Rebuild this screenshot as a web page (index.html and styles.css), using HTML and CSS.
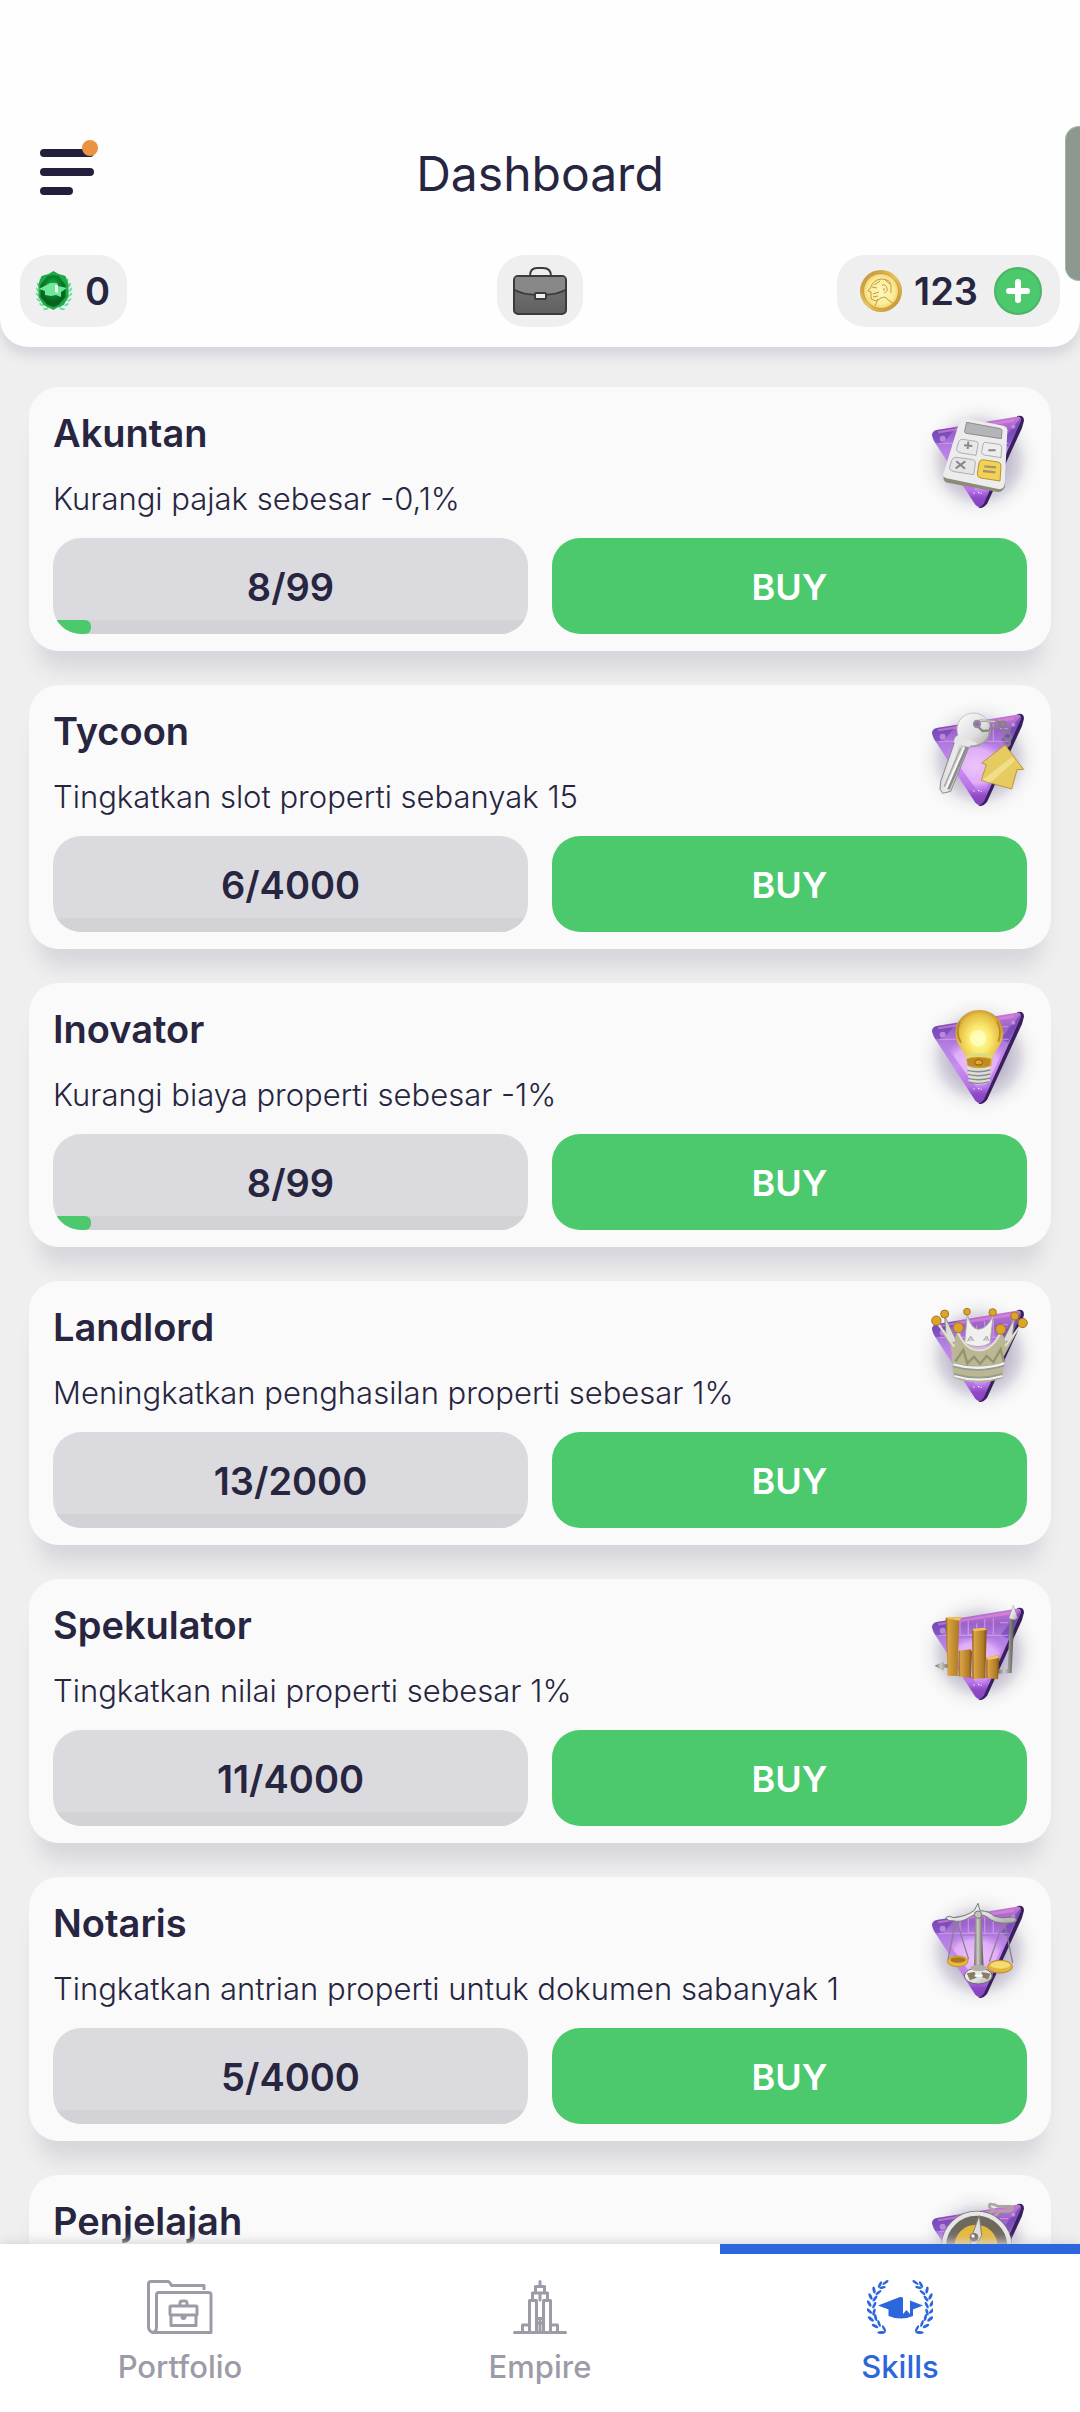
FILE: index.html
```html
<!DOCTYPE html>
<html lang="id">
<head>
<meta charset="utf-8">
<meta name="viewport" content="width=device-width, initial-scale=1">
<title>Dashboard</title>
<link rel="stylesheet" href="styles.css">
</head>
<body>
<svg class="sprite" aria-hidden="true">
  <defs>
    <radialGradient id="glow"><stop offset="0.3" stop-color="#6b5b95" stop-opacity="0.55"/><stop offset="0.65" stop-color="#75698f" stop-opacity="0.26"/><stop offset="0.82" stop-color="#a8a4b4" stop-opacity="0.1"/><stop offset="1" stop-color="#ccc" stop-opacity="0"/></radialGradient>
    <linearGradient id="violet" x1="0" y1="0" x2="0" y2="1"><stop offset="0" stop-color="#c47ad6"/><stop offset="0.17" stop-color="#9a62c8"/><stop offset="0.33" stop-color="#b07be0"/><stop offset="0.6" stop-color="#c98df0"/><stop offset="0.82" stop-color="#b672e6"/><stop offset="0.9" stop-color="#9049c6"/><stop offset="1" stop-color="#8443c0"/></linearGradient>
    <radialGradient id="lilac" cx="0.5" cy="0.45" r="0.55"><stop offset="0" stop-color="#edc4fa"/><stop offset="0.65" stop-color="#e3b2f8" stop-opacity="0.9"/><stop offset="1" stop-color="#c98df0" stop-opacity="0"/></radialGradient>
    <linearGradient id="silver" x1="0" y1="0" x2="1" y2="1"><stop offset="0" stop-color="#fdfdfd"/><stop offset="0.6" stop-color="#dededf"/><stop offset="1" stop-color="#a5a4a4"/></linearGradient>
    <linearGradient id="keysilver" x1="0" y1="0" x2="1" y2="0.4"><stop offset="0" stop-color="#c4c4c4"/><stop offset="0.5" stop-color="#ececec"/><stop offset="1" stop-color="#9c9a9c"/></linearGradient>
    <linearGradient id="steel"><stop offset="0" stop-color="#6d6a66"/><stop offset="0.4" stop-color="#cfcdc7"/><stop offset="1" stop-color="#56534f"/></linearGradient>
    <linearGradient id="gold"><stop offset="0" stop-color="#8d5c12"/><stop offset="0.15" stop-color="#d9a443"/><stop offset="0.75" stop-color="#b07c25"/><stop offset="1" stop-color="#7b4d0d"/></linearGradient>
    <radialGradient id="glass" cx="0.5" cy="0.5" r="0.55"><stop offset="0" stop-color="#fffcae"/><stop offset="0.4" stop-color="#fbea70"/><stop offset="0.78" stop-color="#e6bf45"/><stop offset="1" stop-color="#b98a2a"/></radialGradient>
    <radialGradient id="coin"><stop offset="0" stop-color="#fff7ba"/><stop offset="0.75" stop-color="#fbeb9c"/><stop offset="1" stop-color="#f2d46c"/></radialGradient>
    <linearGradient id="rim" x1="0" y1="0" x2="1" y2="1"><stop offset="0" stop-color="#b78a2f"/><stop offset="0.5" stop-color="#e9c560"/><stop offset="1" stop-color="#b8892c"/></linearGradient>
    <radialGradient id="emerald" cx="0.5" cy="0.35"><stop offset="0" stop-color="#27b84c"/><stop offset="0.5" stop-color="#0c8a2f"/><stop offset="1" stop-color="#07641f"/></radialGradient>
    <linearGradient id="leather" x1="0" y1="0" x2="0" y2="1"><stop offset="0" stop-color="#555"/><stop offset="0.5" stop-color="#6b6b6b"/><stop offset="1" stop-color="#5f5f5f"/></linearGradient>
  </defs>
  <symbol id="gem" viewBox="0 0 420 420" overflow="visible">
    <ellipse cx="208" cy="200" rx="182" ry="178" fill="url(#glow)"/>
    <path d="M322 66q20-4 20 14l-6 22-104 226q-10 16-26 14z" fill="#38205c"/>
    <path d="M66 124q0-12 14-16L318 68q18-3 14 14L222 328q-12 20-26 4L70 138z" fill="url(#violet)"/>
    <path d="M66 124q0-12 14-16l60-8-40 46-24 1z M332 72l-60 74 22 12 38-74z" fill="#5f3bad" opacity=".55"/>
    <path d="M100 156h192l-70 146h-16z" fill="url(#lilac)"/>
    <path d="M84 112l230-38-4 10-225 34z" fill="#e58bd9" opacity=".6"/>
    <path d="M88 148h208M150 108v38M175 104v42h25v-34M224 100v46M250 96v50M270 110h24" stroke="#e2a6ee" stroke-width="4" fill="none" opacity=".6"/>
    <circle cx="98" cy="134" r="9" fill="#d6a0eb" opacity=".7"/><circle cx="310" cy="98" r="6" fill="#d6a0eb" opacity=".7"/>
    <path d="M190 297h4M204 296h4M212 298h3" stroke="#fff" stroke-width="3"/>
  </symbol>
  <symbol id="laurel" viewBox="0 0 24 54" overflow="visible">
    <g fill="currentColor">
      <ellipse cx="18.500" cy="2.500" rx="3.600" ry="1.300" transform="rotate(-35 18.500 2.500)"/>
      <ellipse cx="13" cy="4.500" rx="3.600" ry="1.400" transform="rotate(-65 13 4.500)"/>
      <ellipse cx="15.500" cy="7.500" rx="3.400" ry="1.300" transform="rotate(-10 15.500 7.500)"/>
      <ellipse cx="7" cy="10" rx="3.600" ry="1.500" transform="rotate(-100 7 10)"/>
      <ellipse cx="11.500" cy="12.500" rx="3.600" ry="1.300" transform="rotate(-40 11.500 12.500)"/>
      <ellipse cx="3.500" cy="16.500" rx="3.600" ry="1.500" transform="rotate(65 3.500 16.500)"/>
      <ellipse cx="8" cy="18.500" rx="3.600" ry="1.400" transform="rotate(-55 8 18.500)"/>
      <ellipse cx="2.200" cy="23.500" rx="3.600" ry="1.500" transform="rotate(60 2.200 23.500)"/>
      <ellipse cx="7.300" cy="25" rx="3.600" ry="1.400" transform="rotate(-65 7.300 25)"/>
      <ellipse cx="2.200" cy="31" rx="3.600" ry="1.500" transform="rotate(45 2.200 31)"/>
      <ellipse cx="7" cy="32" rx="3.600" ry="1.400" transform="rotate(-75 7 32)"/>
      <ellipse cx="3.800" cy="39" rx="3.600" ry="1.500" transform="rotate(38 3.800 39)"/>
      <ellipse cx="8.600" cy="37.500" rx="3.600" ry="1.400" transform="rotate(78 8.600 37.500)"/>
      <ellipse cx="8" cy="46" rx="3.600" ry="1.500" transform="rotate(30 8 46)"/>
      <ellipse cx="12" cy="43.500" rx="3.600" ry="1.300" transform="rotate(70 12 43.500)"/>
      <ellipse cx="14.500" cy="52.500" rx="4.200" ry="1.400" transform="rotate(-4 14.500 52.500)"/>
      <ellipse cx="17" cy="48.500" rx="3.600" ry="1.300" transform="rotate(62 17 48.500)"/>
    </g>
  </symbol>
</svg>

<header class="topbar">
  <div class="title-row">
    <button class="menu" type="button" aria-label="Menu">
      <svg width="60" height="60" viewBox="0 0 60 60">
        <path d="M6 15h46M6 34h46M6 53h25" stroke="#221f3d" stroke-width="8" stroke-linecap="round"/>
        <circle cx="52" cy="10" r="8" fill="#eb9142"/>
      </svg>
    </button>
    <h1>Dashboard</h1>
  </div>
  <div class="stats">
    <div class="chip chip-points">
      <svg width="38" height="40" viewBox="0 0 38 40">
        <g color="#5be596"><use href="#laurel" x="1" y="3" width="16" height="36"/><g transform="translate(38 0) scale(-1 1)"><use href="#laurel" x="1" y="3" width="16" height="36"/></g></g>
        <path d="M18.500 0l5 3 7 2 3 8v13l-5 8-7 3-3 2-4-2-6-3-5-8V13l3-8 7-2z" fill="#20a846"/>
        <path d="M18.500 4l5 1 7 9v12l-7 8-5 2-6-2-7-8V14l7-9z" fill="url(#emerald)"/>
        <path d="M4 18l11-6h7l1 3 9 2-6 4v5l-5-2-5 1-6-1v-4z" fill="#6fe89b"/><path d="M20 14h3v8l-3-1z" fill="#e8fff0"/>
      </svg>
      <span>0</span>
    </div>
    <button class="chip chip-case" type="button" aria-label="Portfolio">
      <svg width="54" height="48" viewBox="0 0 54 48">
        <path d="M17 9q0-8 7-8h6q8 0 8 8" fill="none" stroke="#3b3b3b" stroke-width="2"/>
        <rect x="1" y="9" width="52" height="38" rx="4" fill="url(#leather)" stroke="#3b3b3b" stroke-width="2"/>
        <path d="M2 12q0-2 2-2h46q2 0 2 2v11q-8 5-25 5T2 23z" fill="#888"/>
        <path d="M2 23q8 5 25 5t25-5" fill="none" stroke="#3b3b3b" stroke-width="2"/>
        <rect x="22" y="26" width="11" height="6" rx="1" fill="#eee" stroke="#3b3b3b" stroke-width="2"/>
      </svg>
    </button>
    <div class="chip chip-coins">
      <svg width="42" height="42" viewBox="0 0 42 42">
        <circle cx="21" cy="21" r="21" fill="url(#rim)"/><circle cx="21" cy="21" r="17.500" fill="url(#coin)" stroke="#c99d3d"/>
        <path d="M11 17q2-7 10-8 9 0 10 6v8M11 17l-3 4 3 1v7l5 2 5-3M12 17l5 1M22 15q4-1 5 3t-3 5M21 28q5-2 6 1l7 5M15 36l3-7M25 10l5 4M20 11l-6 4M13 24l6-2M13 27l5-1M24 18v3" fill="none" stroke="#c39b3c" stroke-width="1"/>
      </svg>
      <span>123</span>
      <button class="add" type="button" aria-label="Add">
        <svg width="24" height="24" viewBox="0 0 24 24"><path d="M12 3v18M3 12h18" stroke="#fff" stroke-width="6" stroke-linecap="round"/></svg>
      </button>
    </div>
  </div>
</header>

<main class="skills">
  <article class="card">
    <div class="head">
      <div class="copy"><h2>Akuntan</h2><p>Kurangi pajak sebesar -0,1%</p></div>
      <svg class="badge" viewBox="63 60 288 288" aria-hidden="true">
        <use href="#gem" width="420" height="420"/>
        <path d="M101 248q-3 14 12 18l150 28q14 1 21-14l2-14-180-30z" fill="#8d8b78"/>
        <path d="M165 72l115 23q13 3 12 15l-8 160q-2 17-19 15l-155-32q-14-4-9-16l47-152q5-15 17-13z" fill="#ececed"/>
        <path d="M170 85l101 19q6 1 5 8l-2 22-105-16q-6-1-5-8z" fill="#b5b5b8" stroke="#8b8b8e" stroke-width="3"/>
        <g stroke="#8f8f90" stroke-width="2"><path d="M158 136l40 6q8 2 6 10l-6 32-44-7q-16-3-14-14l6-20q4-8 12-7z" fill="#e8e8ea"/><path d="M225 145l42 6q9 2 8 10l-2 30-50-8q-9-2-8-10l4-20q2-9 6-8z" fill="#ededef"/><path d="M138 190l46 6q14 2 12 13l-5 33-58-9q-16-3-14-14l6-20q5-10 13-9z" fill="#e5e5e8"/></g>
        <path d="M218 197l46 7q10 2 9 12l-3 45-58-9q-11-3-10-13l5-32q3-11 11-10z" fill="#f1d158" stroke="#ba9227" stroke-width="3"/>
        <path d="M162 154l25 2M175 143l-2 22M235 169h22M139 202l26 22M166 202l-29 21" stroke="#88888a" stroke-width="6"/><path d="M223 217l35 3M219 231l37 4" stroke="#a5966a" stroke-width="7"/>
      </svg>
    </div>
    <div class="actions">
      <div class="level"><span>8/99</span><div class="track"><div class="fill" style="width:8%"></div></div></div>
      <button class="buy" type="button">BUY</button>
    </div>
  </article>

  <article class="card">
    <div class="head">
      <div class="copy"><h2>Tycoon</h2><p>Tingkatkan slot properti sebanyak 15</p></div>
      <svg class="badge" viewBox="63 60 288 288" aria-hidden="true">
        <use href="#gem" width="420" height="420"/>
        <path d="M134 150L92 268l-2 24 8 12 24-6 56-136z" fill="url(#keysilver)" stroke="#8a8a8a" stroke-width="3"/>
        <path d="M171 164l-56 128" stroke="#8d8d8d" stroke-width="8"/>
        <path d="M152 168L103 284" stroke="#a9a9a9" stroke-width="5"/><path d="M162 166L110 288" stroke="#fafafa" stroke-width="5"/>
        <circle cx="191" cy="113" r="50" fill="url(#silver)" stroke="#b0afb0" stroke-width="2"/>
        <path d="M146 128q-16 8-14 24l46 14q16-2 26-10z" fill="#e6e6e6"/>
        <path d="M239 118q-2 42-60 46" fill="none" stroke="#9b999b" stroke-width="5"/>
        <circle cx="201" cy="96" r="10" fill="#936dba" stroke="#969496" stroke-width="5"/>
        <path d="M208 86l48 2q18 2 15 13-8 8-34 9M204 104l14 13 22-2" fill="none" stroke="#8a8683" stroke-width="7"/><path d="M210 86l46 2" stroke="#e6e6e6" stroke-width="3"/>
        <g fill="none" stroke="#858080" stroke-width="5"><ellipse cx="278" cy="96" rx="11" ry="8"/><ellipse cx="289" cy="114" rx="11" ry="9"/><ellipse cx="292" cy="132" rx="11" ry="9"/><ellipse cx="292" cy="151" rx="8" ry="11"/></g>
        <path d="M285 159l56 73-20 1-16 58-91-26 15-47-14-5z" fill="#e6cb60" stroke="#b79642" stroke-width="3"/><path d="M217 264l90-70 8 12-74 66z" fill="#f1dd8a"/>
      </svg>
    </div>
    <div class="actions">
      <div class="level"><span>6/4000</span><div class="track"></div></div>
      <button class="buy" type="button">BUY</button>
    </div>
  </article>

  <article class="card">
    <div class="head">
      <div class="copy"><h2>Inovator</h2><p>Kurangi biaya properti sebesar -1%</p></div>
      <svg class="badge" viewBox="63 60 288 288" aria-hidden="true">
        <use href="#gem" width="420" height="420"/>
        <path d="M172 226h70l-3 50q-32 15-63 0z" fill="#dededb"/><path d="M172 241q35 9 69-1M173 253q35 9 68-1M174 265q34 9 66-1M176 276q30 9 61-1" fill="none" stroke="#8a8a88" stroke-width="4"/>
        <path d="M208 60c40 0 72 30 72 70 0 38-29 48-32 76l-5 22q-36 14-70 0l-5-24c-5-27-33-38-32-74 1-40 32-70 72-70z" fill="url(#glass)"/>
        <path d="M153 158q-18-30-3-62M265 155q12-31-4-60" stroke="#b5882b" stroke-width="5" fill="none"/><path d="M170 207q35-12 73 0l-5 20q-32 9-64-2z" fill="#c08a26"/><path d="M168 201q37-14 80-1" stroke="#d8dc80" stroke-width="8" fill="none"/><ellipse cx="206" cy="217" rx="12" ry="8" fill="#e5a728" stroke="#8b6014" stroke-width="3"/><circle cx="204" cy="145" r="25" fill="#ffffc4" opacity=".7"/>
      </svg>
    </div>
    <div class="actions">
      <div class="level"><span>8/99</span><div class="track"><div class="fill" style="width:8%"></div></div></div>
      <button class="buy" type="button">BUY</button>
    </div>
  </article>

  <article class="card">
    <div class="head">
      <div class="copy"><h2>Landlord</h2><p>Meningkatkan penghasilan properti sebesar 1%</p></div>
      <svg class="badge" viewBox="63 60 288 288" aria-hidden="true">
        <use href="#gem" width="420" height="420"/>
        <path d="M172 78q10 45 34 46 28-3 44-44l-10 86q-34 20-76 0z" fill="#f0f0ee" stroke="#a9a8a8" stroke-width="3"/><path d="M104 84l40 84-35-10zM314 88l-40 80 32-14z" fill="#deded9" stroke="#8b8985" stroke-width="3"/><path d="M172 160l10-16 10 14M220 158l10-14 7 14" fill="#ccc" stroke="#aaa" stroke-width="3"/>
        <path d="M80 104l50 70 12-44q26 54 66 54 39-2 65-54l16 35 45-58-52 98-4 64q-70 28-147 0l-8-94z" fill="#bab894"/>
        <path d="M142 130q26 58 66 57 42-2 65-57M82 104l51 72M335 108l-49 66" fill="none" stroke="#e2e1d2" stroke-width="6"/>
        <path d="M136 220l24-34 12 40 20-20 18 22 20-24 20 18 22-38 10 38" fill="none" stroke="#94936c" stroke-width="7"/><path d="M130 231q75 22 152-3M132 262q73 22 146 0" stroke="#9a9a92" stroke-width="14" fill="none"/><path d="M130 229q75 22 152-3M132 264q73 22 146 0" stroke="#f2f2ee" stroke-width="7" fill="none"/>
        <g fill="#dba42b" stroke="#a8771d" stroke-width="3"><circle cx="79" cy="98" r="14"/><circle cx="104" cy="78" r="12"/><circle cx="171" cy="71" r="10"/><circle cx="248" cy="73" r="11"/><circle cx="314" cy="84" r="12"/><circle cx="338" cy="105" r="14"/><circle cx="145" cy="119" r="15"/><circle cx="272" cy="124" r="15"/></g>
      </svg>
    </div>
    <div class="actions">
      <div class="level"><span>13/2000</span><div class="track"></div></div>
      <button class="buy" type="button">BUY</button>
    </div>
  </article>

  <article class="card">
    <div class="head">
      <div class="copy"><h2>Spekulator</h2><p>Tingkatkan nilai properti sebesar 1%</p></div>
      <svg class="badge" viewBox="63 60 288 288" aria-hidden="true">
        <use href="#gem" width="420" height="420"/>
        <path d="M300 92l13 1-8 168-42 2v-12l30-1z" fill="url(#steel)"/><path d="M310 57l13 39q-13 11-26 0z" fill="url(#silver)" stroke="#777"/><path d="M74 239l25-12 4 8h17v10h-17l-4 9z" fill="url(#steel)"/>
        <path d="M107 96l14-3 36 2-10 9-4 166-30-1z" fill="url(#gold)"/><path d="M107 96l14-3 36 2-10 9z" fill="#f2c35c"/><path d="M146 194l36-4 4 8-3 78-37-5z" fill="url(#gold)"/><path d="M187 129l36-4 7 7-4 145-39 2z" fill="url(#gold)"/><path d="M187 129l36-4 7 7-38 4z" fill="#f2c35c"/><path d="M229 215l34-7 5 8-4 64-35-4z" fill="url(#gold)"/><path d="M229 215l34-7 5 8-36 6z" fill="#f2c35c"/>
      </svg>
    </div>
    <div class="actions">
      <div class="level"><span>11/4000</span><div class="track"></div></div>
      <button class="buy" type="button">BUY</button>
    </div>
  </article>

  <article class="card">
    <div class="head">
      <div class="copy"><h2>Notaris</h2><p>Tingkatkan antrian properti untuk dokumen sabanyak 1</p></div>
      <svg class="badge" viewBox="63 60 288 288" aria-hidden="true">
        <use href="#gem" width="420" height="420"/>
        <path d="M137 111l-23 117M140 111l36 115M280 115l-42 118M283 115l25 122" fill="none" stroke="#8b8090" stroke-width="4"/>
        <path d="M196 96h18l7 158h-29z" fill="url(#steel)"/><path d="M204 58l6 22q28 1 42 16 24 10 54 3 14 0 13 11-8 9-25 7-40 4-64-19-26-13-48 0-29 20-54 12-16 2-20-10 9-7 23 1 37-3 62-22z" fill="url(#silver)" stroke="#7a7878" stroke-width="3"/><circle cx="204" cy="92" r="11" fill="#c3c2bd" stroke="#777" stroke-width="3"/>
        <ellipse cx="205" cy="276" rx="42" ry="24" fill="url(#silver)" stroke="#696560" stroke-width="3"/><path d="M170 268l24-5 6 18-20 8zM215 264l26 5-7 17-18-6z" fill="#8a7c61"/><ellipse cx="206" cy="252" rx="25" ry="10" fill="#b2afaa"/><path d="M194 275h24" stroke="#fff" stroke-width="6"/>
        <ellipse cx="143" cy="232" rx="31" ry="16" fill="#e7b83f" stroke="#c5902b" stroke-width="3"/><ellipse cx="144" cy="228" rx="23" ry="8" fill="#aa771f"/><ellipse cx="270" cy="248" rx="37" ry="19" fill="#e3b441" stroke="#bb892b" stroke-width="3"/><ellipse cx="271" cy="243" rx="30" ry="11" fill="#f6db72"/>
      </svg>
    </div>
    <div class="actions">
      <div class="level"><span>5/4000</span><div class="track"></div></div>
      <button class="buy" type="button">BUY</button>
    </div>
  </article>

  <article class="card">
    <div class="head">
      <div class="copy"><h2>Penjelajah</h2></div>
      <svg class="badge" viewBox="63 60 288 288" aria-hidden="true">
        <use href="#gem" width="420" height="420"/>
        <path d="M238 96l12-12q-18-8-10-18 16 1 24 7h38q12 13-7 15h-27l-16 18" fill="none" stroke="#aaa69d" stroke-width="8"/>
        <circle cx="200" cy="193" r="104" fill="#6e685d" stroke="#74726f" stroke-width="5"/><circle cx="200" cy="193" r="98" fill="none" stroke="#e7e7e8" stroke-width="13"/><circle cx="198" cy="193" r="65" fill="#e3b83c"/><path d="M198 128v130M133 193h130" stroke="#a87d21" stroke-width="3"/>
        <path d="M208 100l7 61-15 24-12 25 -10-7 8-42z" fill="#dedddd" stroke="#837c70" stroke-width="3"/><circle cx="192" cy="166" r="13" fill="#70685d"/><circle cx="189" cy="162" r="5" fill="#fff"/>
      </svg>
    </div>
  </article>
</main>

<nav class="tabs">
  <a class="tab" href="#portfolio">
    <svg width="66" height="54" viewBox="0 0 66 54" fill="none" stroke="currentColor" stroke-width="3" stroke-linejoin="round"><path d="M6 52.500q-4.500-1-4.500-6V4q0-2.500 2.500-2.500h17q1.500 0 3.500 4H57V10M64 52.500V15q0-2.500-2.500-2.500H12q-2.500 0-2.500 2.500v32q0 5-4 5.500z"/><rect x="23" y="26" width="27" height="9" rx="1"/><path d="M24 35v10.500h25V35M33 26v-3q0-2 2-2h3q2 0 2 2v3"/><circle cx="36.500" cy="37" r="1.500"/></svg>
    <span>Portfolio</span>
  </a>
  <a class="tab" href="#empire">
    <svg width="54" height="54" viewBox="0 0 54 54" fill="none" stroke="currentColor" stroke-width="3" stroke-linejoin="round" stroke-linecap="round"><path d="M1.500 52.500h51M9.500 52v-7h7M44.500 52v-7h-7M16.500 52V20.500h7V52M37.500 52V20.500h-7V52M19.500 20v-7h15v7M22.500 13V6.500h9V13M27 6V1.500M27 13v7M27 41v11M23.500 38.500h7M23.500 43h7"/></svg>
    <span>Empire</span>
  </a>
  <a class="tab active" href="#skills" aria-current="page">
    <svg width="66" height="54" viewBox="0 0 66 54"><use href="#laurel" width="24" height="54"/><g transform="translate(67 0) scale(-1 1)"><use href="#laurel" width="24" height="54"/></g><path d="M11 25.500L33 17l3 .5V34l3.500-4 3.500 4V20.500l13 5-10 4V36q-12 5-24.500 0v-6.500z" fill="currentColor"/></svg>
    <span>Skills</span>
  </a>
</nav>
<div class="edge-handle"></div>
</body>
</html>
```
FILE: styles.css
```css
* { box-sizing: border-box; }

body {
  margin: 0;
  height: 100vh;
  display: flex;
  flex-direction: column;
  background: #efefef;
  color: #27253f;
  font-family: Inter, "Noto Sans", sans-serif;
}

button {
  border: 0;
  padding: 0;
  font: inherit;
  color: inherit;
  cursor: pointer;
}

h1, h2, p { margin: 0; }
svg { display: block; flex: none; }
.sprite { position: absolute; width: 0; height: 0; }

.topbar {
  z-index: 1;
  flex: none;
  padding: 126px 20px 20px;
  background: #fefefe;
  border-radius: 0 0 28px 28px;
  box-shadow: 0 9px 12px #d7d6dc;
}

.title-row {
  display: grid;
  grid-template-columns: 1fr auto 1fr;
  align-items: center;
  height: 96px;
  padding: 0 18px;
}
.title-row h1 {
  font-size: 48px;
  font-weight: 400;
  line-height: 56px;
}
.menu {
  width: 60px;
  height: 60px;
  margin-bottom: 12px;
  background: none;
}

.stats {
  display: grid;
  grid-template-columns: 1fr auto 1fr;
  margin-top: 33px;
}
.chip {
  display: flex;
  align-items: center;
  height: 72px;
  border-radius: 28px;
  background: #efefef;
  font-size: 38px;
  font-weight: 600;
}
.chip-points { justify-self: start; gap: 12px; padding: 0 17px 0 15px; }
.chip-case { padding: 0 16px; }
.chip-coins { justify-self: end; gap: 12px; padding: 0 18px 0 23px; }
.add {
  display: grid;
  place-items: center;
  width: 48px;
  height: 48px;
  margin-left: 4px;
  border: 2px solid #48b567;
  border-radius: 50%;
  background: #4bc96c;
}

.skills {
  flex: 1;
  min-height: 0;
  overflow-y: auto;
  scrollbar-width: none;
  display: flex;
  flex-direction: column;
  gap: 34px;
  padding: 40px 29px;
}
.card {
  flex: none;
  padding: 24px 24px 17px;
  border-radius: 30px;
  background: #fafafa;
  box-shadow: 0 27px 20px -9px #d7d6dc;
}
.head {
  display: flex;
  justify-content: space-between;
  align-items: flex-start;
}
.copy {
  display: flex;
  flex-direction: column;
  gap: 24px;
}
.copy h2 {
  font-size: 38px;
  font-weight: 600;
  line-height: 44px;
}
.copy p {
  font-size: 31px;
  font-weight: 300;
  line-height: 40px;
}
.badge {
  width: 96px;
  height: 96px;
  margin-top: 3px;
  overflow: visible;
}

.actions {
  display: grid;
  grid-template-columns: 1fr 1fr;
  gap: 24px;
  margin-top: 19px;
}
.level, .buy {
  height: 96px;
  border-radius: 28px;
  font-size: 38px;
  font-weight: 600;
  line-height: 46px;
}
.level {
  display: flex;
  flex-direction: column;
  justify-content: space-between;
  overflow: hidden;
  padding-top: 26px;
  background: #dbdadf;
  text-align: center;
}
.track { height: 14px; background: #d3d2d7; }
.fill {
  height: 100%;
  border-radius: 0 6px 6px 0;
  background: #4bc96c;
}
.buy {
  padding-top: 2px;
  background: #4bc96c;
  color: #fff;
  font-size: 36px;
}

.tabs {
  z-index: 1;
  flex: none;
  display: grid;
  grid-template-columns: repeat(3, 1fr);
  background: #fff;
  box-shadow: 0 -2px 10px #d7d6dc;
}
.tab {
  display: flex;
  flex-direction: column;
  align-items: center;
  gap: 14px;
  height: 168px;
  padding-top: 26px;
  border-top: 10px solid transparent;
  color: #9d9ba8;
  font-size: 31px;
  font-weight: 500;
  line-height: 38px;
  text-decoration: none;
}
.tab.active { border-top-color: #2c66dc; color: #2c66dc; }

.edge-handle {
  position: absolute;
  z-index: 2;
  top: 126px;
  right: 0;
  width: 15px;
  height: 155px;
  border: 1px solid #9cbaa2;
  border-right: 0;
  border-radius: 14px 0 0 14px;
  background: #8f988f;
}
```
